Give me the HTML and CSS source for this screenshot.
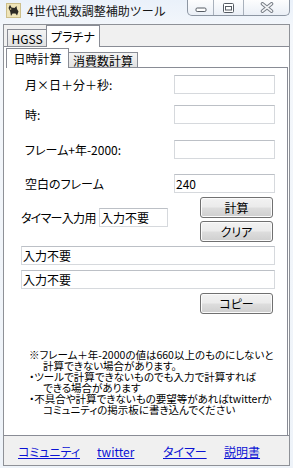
FILE: index.html
```html
<!DOCTYPE html>
<html lang="ja">
<head>
<meta charset="utf-8">
<title>4世代乱数調整補助ツール</title>
<link rel="stylesheet" href="styles.css">
</head>
<body>
<div class="window">
  <div class="titlebar">
    <svg class="app-icon" viewBox="0 0 15 15" width="15" height="15">
      <rect x="0.5" y="0.5" width="14" height="14" fill="#efe4b8" stroke="#cdbf8c"/>
      <path d="M2.5 5 L4 1.8 L5.5 4.5 L8.5 5 L10.5 3 L11 6 L12.5 8.5 L11 12.5 L9.5 10.5 L6.5 10.5 L5 13 L4.2 8.5 Z" fill="#2c2a26"/>
      <circle cx="4.6" cy="6" r="0.8" fill="#e8d9a0"/>
    </svg>
    <span class="title">4世代乱数調整補助ツール</span>
    <div class="caption-buttons">
      <div class="cap cap-min">
        <svg width="12" height="6" viewBox="0 0 12 6"><rect x="1" y="1" width="10" height="3.5" rx="1.2" fill="#fff" stroke="#555b63"/></svg>
      </div>
      <div class="cap cap-max">
        <svg width="11" height="10" viewBox="0 0 11 10"><rect x="0.5" y="0.5" width="10" height="9" rx="1" fill="#fff" stroke="#555b63"/><rect x="2.5" y="3.5" width="6" height="3.5" fill="#fff" stroke="#555b63"/></svg>
      </div>
      <div class="cap cap-close">
        <svg width="14" height="11" viewBox="0 0 14 11"><path d="M2.5 1.8 L11.5 9.2 M11.5 1.8 L2.5 9.2" stroke="#7b8089" stroke-width="3.6" stroke-linecap="round"/><path d="M2.5 1.8 L11.5 9.2 M11.5 1.8 L2.5 9.2" stroke="#f4f5f7" stroke-width="1.6" stroke-linecap="round"/></svg>
      </div>
    </div>
  </div>

  <div class="client">
    <div class="tabstrip outer-tabs">
      <div class="tab">HGSS</div>
      <div class="tab active">プラチナ</div>
    </div>

    <div class="outer-page">
      <div class="tabstrip inner-tabs">
        <div class="tab active">日時計算</div>
        <div class="tab">消費数計算</div>
      </div>

      <div class="inner-page">
        <div class="row r1"><span class="lbl">月×日＋分＋秒:</span><input class="box" type="text" value=""></div>
        <div class="row r2"><span class="lbl">時:</span><input class="box" type="text" value=""></div>
        <div class="row r3"><span class="lbl">フレーム+年-2000:</span><input class="box" type="text" value=""></div>
        <div class="row r4"><span class="lbl">空白のフレーム</span><input class="box" type="text" value="240"></div>

        <div class="timer-row">
          <div class="timer-left">
            <span class="timer-lbl">タイマー入力用</span>
            <input class="box small" type="text" value="入力不要">
          </div>
          <div class="btn-col">
            <button class="btn" type="button">計算</button>
            <button class="btn" type="button">クリア</button>
          </div>
        </div>

        <input class="box wide w1" type="text" value="入力不要">
        <input class="box wide w2" type="text" value="入力不要">

        <button class="btn copy" type="button">コピー</button>

        <div class="notes">
          <div>※フレーム＋年-2000の値は660以上のものにしないと</div>
          <div class="ind">計算できない場合があります。</div>
          <div>・ツールで計算できないものでも入力で計算すれば</div>
          <div class="ind">できる場合があります</div>
          <div>・不具合や計算できないもの要望等があればtwitterか</div>
          <div class="ind">コミュニティの掲示板に書き込んでください</div>
        </div>
      </div>
    </div>

    <div class="links">
      <a href="#">コミュニティ</a>
      <a href="#">twitter</a>
      <a href="#">タイマー</a>
      <a href="#">説明書</a>
    </div>
  </div>
</div>
</body>
</html>
```

FILE: styles.css
```css
* { box-sizing: border-box; }
html, body { margin: 0; padding: 0; }
body {
  width: 293px;
  height: 468px;
  overflow: hidden;
  background: linear-gradient(#eaf1fa, #f4f7fb 30px, #eef3f9);
  font-family: "Noto Sans CJK JP", "Noto Sans", sans-serif;
  font-size: 12px;
  color: #000;
  font-feature-settings: "palt" 1;
}
.window { display: flex; flex-direction: column; height: 468px; }

/* title bar */
.titlebar { height: 24px; display: flex; align-items: flex-start; flex: none; }
.app-icon { width: 15px; height: 15px; margin: 3px 0 0 6px; flex: none; }
.title {
  margin-left: 6px;
  line-height: 22px;
  font-size: 12px;
  color: #151515;
  font-feature-settings: normal;
  white-space: nowrap;
}
.caption-buttons {
  margin-left: auto;
  margin-right: 3px;
  display: flex;
  height: 16px;
  border: 1px solid #8d96a3;
  border-top: none;
  border-radius: 0 0 5px 5px;
  overflow: hidden;
  background: linear-gradient(#fdfdfe, #eaeff6);
}
.cap { height: 100%; display: flex; align-items: center; justify-content: center; }
.cap svg { display: block; }
.cap-min { width: 25px; padding-top: 4px; }
.cap-max { width: 30px; border-left: 1px solid #a9b1bc; }
.cap-close { width: 46px; border-left: 1px solid #a9b1bc; }

/* client area */
.client {
  flex: 1;
  margin: 0 3px 2px;
  border: 1px solid #8e9197;
  background: #f0f0f0;
  display: flex;
  flex-direction: column;
}
.tabstrip { display: flex; align-items: flex-end; flex: none; }
.tab {
  border: 1px solid #898c95;
  border-bottom: none;
  background: linear-gradient(#f4f4f4, #e2e2e2);
  display: flex;
  align-items: center;
  justify-content: center;
  white-space: nowrap;
  font-size: 12px;
}
.tab + .tab { margin-left: -1px; }
.tab.active {
  background: #fff;
  position: relative;
  z-index: 1;
  margin-bottom: -1px;
}
.outer-tabs { height: 21px; padding-left: 3px; }
.outer-tabs .tab { width: 40px; height: 17px; }
.outer-tabs .tab.active { width: 54px; height: 22px; }

.outer-page {
  flex: 1;
  background: #fff;
  border-top: 1px solid #898c95;
  border-bottom: 1px solid #898c95;
  display: flex;
  flex-direction: column;
}
.inner-tabs { height: 20px; margin-left: 2px; }
.inner-tabs .tab { width: 70px; height: 15px; }
.inner-tabs .tab.active { width: 63px; height: 20px; }

.inner-page {
  flex: 1;
  margin: 0 1px 0 2px;
  border-top: 1px solid #898c95;
  border-right: 1px solid #898c95;
  padding: 0 12px 0 15px;
  display: flex;
  flex-direction: column;
}

/* form rows */
.row {
  display: flex;
  align-items: center;
  justify-content: space-between;
  height: 19px;
  flex: none;
}
.lbl { margin-left: 4px; white-space: nowrap; }
.r1 { margin-top: 7px; }
.r2 { margin-top: 11px; }
.r3 { margin-top: 16px; }
.r4 { margin-top: 15px; }

.box {
  width: 101px;
  height: 19px;
  border: 1px solid #d6d9dd;
  border-top-color: #bcc0c6;
  padding: 0 1px;
  margin: 0;
  font-family: inherit;
  font-size: 12px;
  font-feature-settings: "palt" 1;
  background: #fff;
  color: #000;
  outline: none;
  flex: none;
}
.box.small { width: 69px; }
.box.wide { width: 100%; }
.w1 { margin-top: 4px; }
.w2 { margin-top: 5px; }

.timer-row { display: flex; justify-content: space-between; margin-top: 4px; flex: none; }
.timer-left { display: flex; align-items: center; margin-top: 11px; align-self: flex-start; }
.timer-lbl { width: 78px; white-space: nowrap; letter-spacing: -0.7px; }
.btn-col { display: flex; flex-direction: column; gap: 3px; margin-right: 2px; }

.btn {
  width: 73px;
  height: 21px;
  border: 1px solid #707070;
  border-radius: 3px;
  background: linear-gradient(#f2f2f2 0%, #ebebeb 48%, #dddddd 52%, #cfcfcf 100%);
  box-shadow: inset 0 0 0 1px #fbfbfb;
  font-family: inherit;
  font-size: 12px;
  font-feature-settings: "palt" 1;
  color: #000;
  padding: 0;
  margin: 0;
  display: flex;
  align-items: center;
  justify-content: center;
  flex: none;
}
.btn.copy { align-self: flex-end; margin-top: 4px; margin-right: 2px; }

.notes {
  margin-top: 35px;
  padding-left: 8px;
  font-size: 10.5px;
  line-height: 11px;
  white-space: nowrap;
}
.notes .ind { padding-left: 14px; }

/* bottom links */
.links {
  height: 29px;
  flex: none;
  display: grid;
  grid-template-columns: 79px 66px 61px auto;
  align-items: start;
  padding: 8px 0 0 14px;
  line-height: 16px;
}
.links a {
  color: #0b12d4;
  text-decoration: underline;
  justify-self: start;
}
```
